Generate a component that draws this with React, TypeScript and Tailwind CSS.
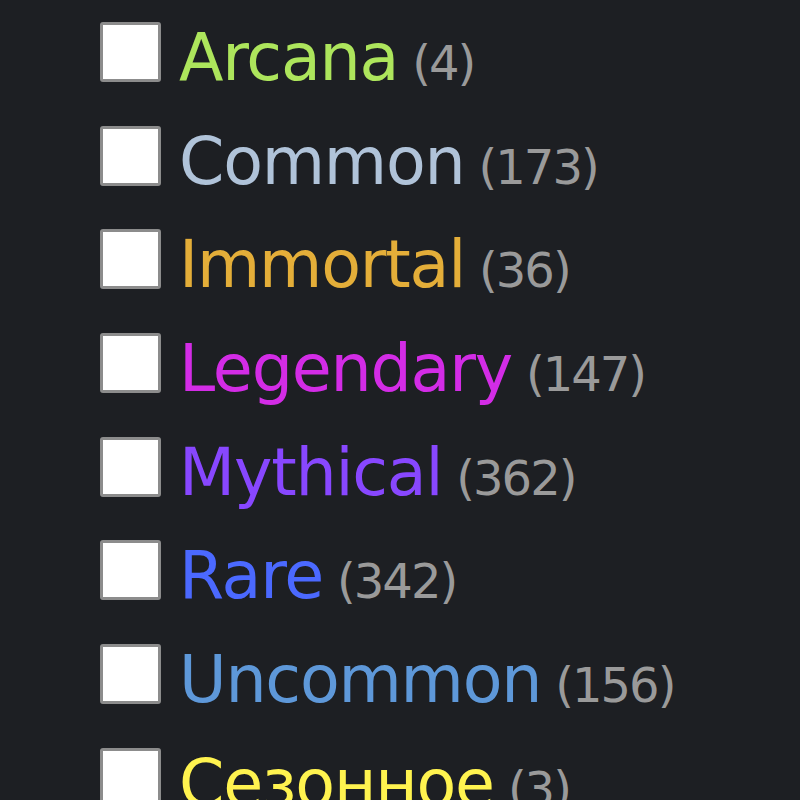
const RARITIES = [
  { name: 'Arcana', count: 4, color: 'text-[#ade55c]' },
  { name: 'Common', count: 173, color: 'text-[#b0c3d9]' },
  { name: 'Immortal', count: 36, color: 'text-[#e4ae39]' },
  { name: 'Legendary', count: 147, color: 'text-[#d32ce6]' },
  { name: 'Mythical', count: 362, color: 'text-[#8847ff]' },
  { name: 'Rare', count: 342, color: 'text-[#4b69ff]' },
  { name: 'Uncommon', count: 156, color: 'text-[#5e98d9]' },
  { name: 'Сезонное', count: 3, color: 'text-[#fff34f]' },
]

export default function App() {
  return (
    <div className="w-[800px] h-[800px] overflow-hidden bg-[#1d1f23] pl-[100px] font-['DejaVu_Sans',Verdana,sans-serif]">
      {RARITIES.map((r) => (
        <label key={r.name} className="flex items-start h-[103.7px]">
          <span className="mt-[22px] w-[61px] h-[60px] shrink-0 bg-white border-[3px] border-[#8c8c8c] rounded-[3px]" />
          <span className="mt-[26px] ml-[18px] leading-[63px] whitespace-nowrap">
            <span className={`text-[65px] tracking-[-1.2px] ${r.color}`}>{r.name}</span>
            <span className="text-[48px] tracking-[-2px] text-[#9a9a9a] ml-[14px]">({r.count})</span>
          </span>
        </label>
      ))}
    </div>
  )
}
